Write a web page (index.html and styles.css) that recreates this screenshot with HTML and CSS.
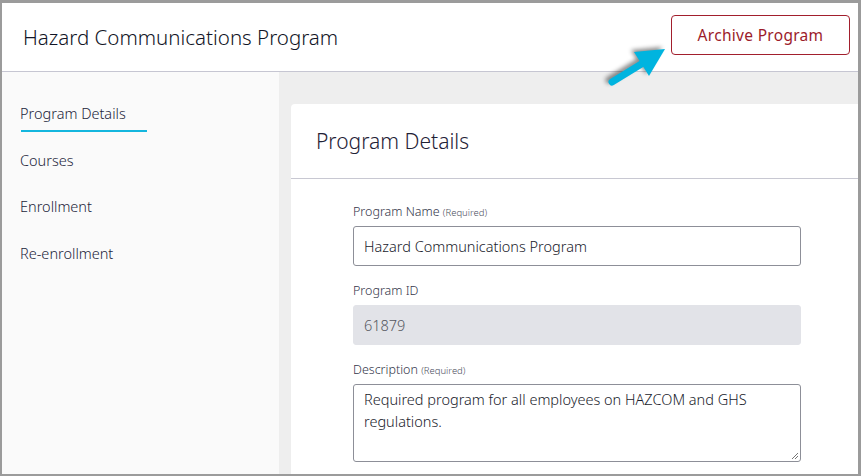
FILE: index.html
```html
<!DOCTYPE html>
<html lang="en">
  <head>
    <meta charset="UTF-8" />
    <meta name="viewport" content="width=device-width, initial-scale=1.0" />
    <title>Hazard Communications Program</title>
    <link rel="stylesheet" href="styles.css">
  </head>
  <body>

    <div class="frame">
      <div class="topbar">
        <h1 class="page-title">Hazard Communications Program</h1>
        <button class="archive-btn">Archive Program</button>
      </div>

      <div class="main">
        <ul class="side-nav">
          <li class="active">Program Details</li>
          <li>Courses</li>
          <li>Enrollment</li>
          <li>Re-enrollment</li>
        </ul>

        <div class="content">
          <div class="card">
            <div class="card-head">Program Details</div>
            <div class="card-body">
              <label class="field-label">Program Name <small>(Required)</small></label>
              <div class="field">Hazard Communications Program</div>

              <label class="field-label">Program ID</label>
              <div class="field readonly">61879</div>

              <label class="field-label">Description <small>(Required)</small></label>
              <div class="field area">Required program for all employees on HAZCOM and GHS regulations.
                <svg class="grip" width="9" height="9" viewBox="0 0 9 9">
                  <path d="M8 2 L2 8 M8 5 L5 8" stroke="#777" stroke-width="1" />
                </svg>
              </div>
            </div>
          </div>
        </div>
      </div>

      <!-- callout arrow pointing to the button -->
      <svg class="callout" width="75" height="55" viewBox="0 0 75 55">
        <line x1="11" y1="42" x2="42" y2="23" stroke="#00b4df" stroke-width="7" stroke-linecap="round" />
        <polygon points="64,9 33,12 48,36" fill="#00b4df" />
      </svg>
    </div>

  </body>
</html>
```

FILE: styles.css
```css
body {
    margin: 0;
    font-family: "Noto Sans", Lato, sans-serif;
    font-weight: 300;
    color: #23263a;
}

.frame {
    position: relative;
    box-sizing: border-box;
    width: 861px;
    height: 476px;
    border-style: solid;
    border-color: #9b9b9b;
    border-width: 3px 3px 2px 2px;
    display: flex;
    flex-direction: column;
    overflow: hidden;
}

.topbar {
    height: 68px;
    flex: none;
    display: flex;
    align-items: center;
    justify-content: space-between;
    padding: 0 8px 0 21px;
    background: #fff;
    border-bottom: 1px solid #c6c6d2;
}

.page-title {
    margin: 0;
    font-size: 20.5px;
    font-weight: 300;
    color: #121526;
}

.archive-btn {
    width: 179px;
    height: 40px;
    margin-bottom: 4px;
    background: #fff;
    border: 1px solid #a21f2d;
    border-radius: 4px;
    color: #9c1b2a;
    font-family: "Noto Sans", Lato, sans-serif;
    font-weight: 400;
    font-size: 15.5px;
    letter-spacing: 0.3px;
}

.main {
    flex: 1;
    display: flex;
    min-height: 0;
}

.side-nav {
    width: 277px;
    flex: none;
    margin: 0;
    padding: 24px 0 0 19px;
    box-sizing: border-box;
    list-style: none;
    background: #fafafa;
    display: flex;
    flex-direction: column;
    gap: 10.5px;
}

.side-nav li {
    padding: 7px 0;
    text-indent: -1px;
    line-height: 20px;
    font-size: 14.5px;
    border-bottom: 2px solid transparent;
    color: #23253a;
}

.side-nav li.active {
    width: 126px;
    border-bottom-color: #14b6de;
}

.content {
    flex: 1;
    background: #eeeeee;
    padding: 32px 0 0 12px;
    display: flex;
}

.card {
    flex: 1;
    background: #fff;
    border-radius: 4px 0 0 0;
}

.card-head {
    height: 75px;
    box-sizing: border-box;
    padding: 23px 0 0 25px;
    font-size: 21px;
    line-height: 28px;
    border-bottom: 1px solid #c8c8d2;
    color: #1f2236;
}

.card-body {
    padding: 24px 0 0 62px;
}

.field-label {
    display: block;
    height: 18px;
    font-size: 12.5px;
    line-height: 18px;
    color: #33364a;
    margin-bottom: 5px;
}

.field-label small {
    font-size: 9.5px;
    line-height: 1;
    color: #4a4d5c;
}

.field {
    position: relative;
    box-sizing: border-box;
    width: 448px;
    height: 40px;
    padding: 8px 10px;
    font-size: 14.5px;
    line-height: 22px;
    color: #1a1c2c;
    border: 1px solid #8d8f98;
    border-radius: 3px;
    margin-bottom: 16px;
}

.field.readonly {
    background: #e2e3e8;
    border-color: #e2e3e8;
    color: #55575f;
}

.field.area {
    height: 78px;
    padding-top: 3px;
}

.grip {
    position: absolute;
    right: 1px;
    bottom: 1px;
}

.callout {
    position: absolute;
    left: 599px;
    top: 37px;
    filter: drop-shadow(-3px -2px 2px rgba(0, 0, 0, 0.45));
}
```
